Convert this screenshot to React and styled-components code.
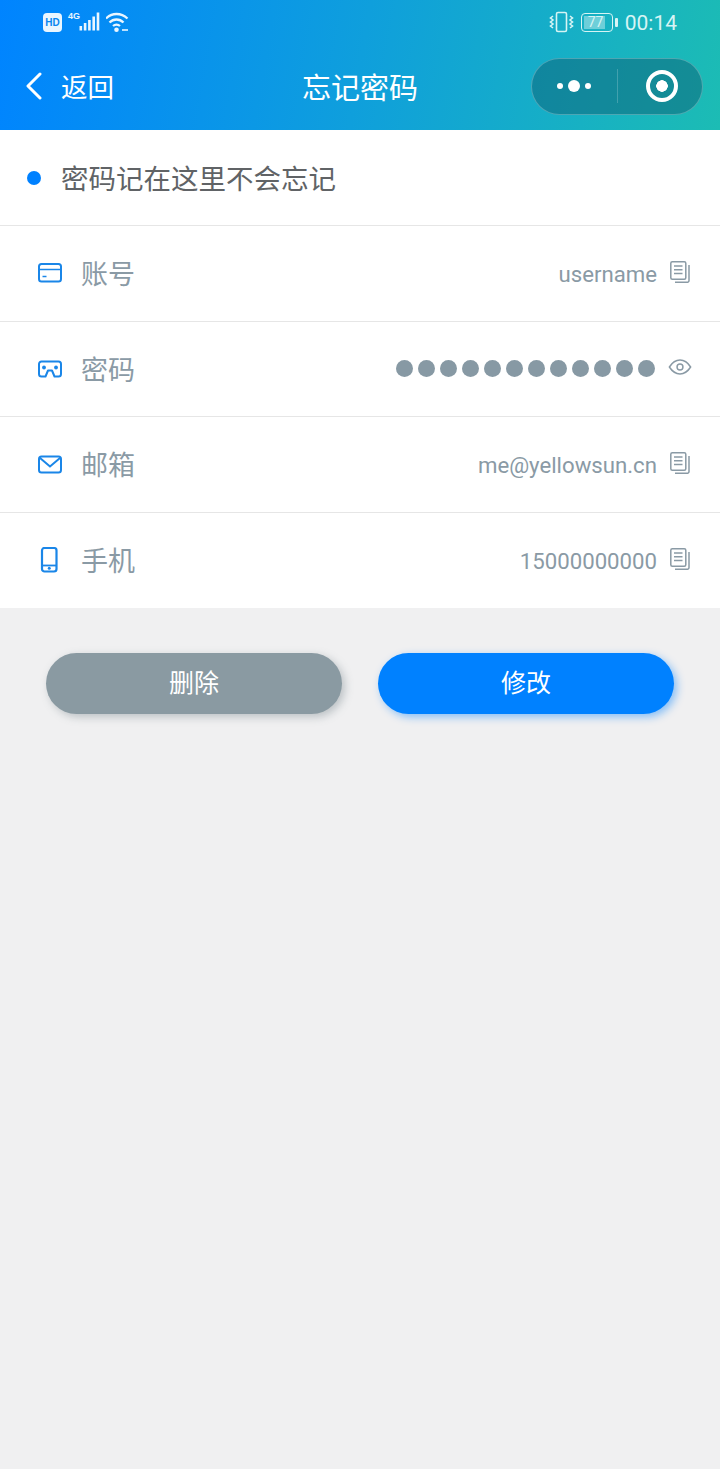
import React from 'react'
import styled, { createGlobalStyle } from 'styled-components'

const FONT = `"Noto Sans CJK SC", "Noto Sans", sans-serif`

const GlobalStyle = createGlobalStyle`
    html, body {
        margin: 0;
        padding: 0;
        background: #f0f0f1;
    }
    * {
        box-sizing: border-box;
    }
`

const rows = [
    { label: '账号', value: 'username', icon: 'card' },
    { label: '密码', icon: 'vr', secret: 12 },
    { label: '邮箱', value: 'me@yellowsun.cn', icon: 'mail' },
    { label: '手机', value: '15000000000', icon: 'phone' },
]

const RowIcon = ({ name }) => {
    if (name === 'card') {
        return (
            <svg width="26" height="26" viewBox="0 0 26 26" fill="none" stroke="#1a86e8" strokeWidth="2">
                <rect x="3" y="4" width="22" height="17.500" rx="2.500" />
                <path d="M3 9.500h22" strokeWidth="1.500" />
                <path d="M6.500 16.500h4" strokeWidth="1.500" />
            </svg>
        )
    }
    if (name === 'vr') {
        return (
            <svg width="26" height="26" viewBox="0 0 26 26" fill="none" stroke="#1a86e8" strokeWidth="2" strokeLinejoin="round">
                <path d="M5.500 5.500h17a2.500 2.500 0 0 1 2.500 2.500v10a2.500 2.500 0 0 1-2.500 2.500h-4l-2.500-6h-4l-2.500 6h-4A2.500 2.500 0 0 1 3 18V8a2.500 2.500 0 0 1 2.500-2.500z" />
                <circle cx="8" cy="11.500" r="1.900" fill="#1a86e8" stroke="none" />
                <circle cx="20" cy="11.500" r="1.900" fill="#1a86e8" stroke="none" />
            </svg>
        )
    }
    if (name === 'mail') {
        return (
            <svg width="26" height="26" viewBox="0 0 26 26" fill="none" stroke="#1a86e8" strokeWidth="2">
                <rect x="3" y="5.500" width="22" height="16" rx="2.500" />
                <path d="M4 7l10 8.500L24 7" />
            </svg>
        )
    }
    return (
        <svg width="26" height="26" viewBox="0 0 26 26" fill="none" stroke="#1a86e8" strokeWidth="2.200">
            <rect x="6" y="1" width="14.500" height="23.500" rx="2.500" />
            <path d="M6 18.500h14.500" strokeWidth="1.800" />
            <circle cx="13.250" cy="21.300" r="1.500" fill="#1a86e8" stroke="none" />
        </svg>
    )
}

const CopyIcon = () => (
    <svg width="20" height="22" viewBox="0 0 20 22" fill="none" stroke="#8a9aa5" strokeWidth="1.500">
        <rect x="0.800" y="0.800" width="15" height="17.500" rx="1.500" />
        <path d="M4 5h8.500M4 8.800h8.500M4 12.500h8.500" />
        <path d="M19 4v15.500a1.800 1.800 0 0 1-1.800 1.800H5" />
    </svg>
)

const EyeIcon = () => (
    <svg width="26" height="20" viewBox="0 0 26 20" fill="none" stroke="#8a9aa5" strokeWidth="1.600">
        <path d="M1.500 10C5 4.500 9 2.500 13 2.500s8 2 11.500 7.500C21 15.500 17 17.500 13 17.500S5 15.500 1.500 10z" />
        <circle cx="13" cy="10" r="3.200" />
    </svg>
)

const App = () => {
    return (
        <Page>
            <GlobalStyle />
            <Header>
                <StatusBar>
                    <StatusGroup>
                        <HdBadge>HD</HdBadge>
                        <FourG>4G</FourG>
                        <svg width="21" height="20" viewBox="0 0 21 20" fill="#eaf6ff">
                            <rect x="0.500" y="14" width="2.600" height="4.500" />
                            <rect x="4.800" y="11" width="2.600" height="7.500" />
                            <rect x="9.100" y="8" width="2.600" height="10.500" />
                            <rect x="13.400" y="4.500" width="2.600" height="14" />
                            <rect x="17.700" y="0.500" width="2.600" height="18" />
                        </svg>
                        <svg width="24" height="22" viewBox="1 0 24 22" fill="none" stroke="#eaf6ff" strokeWidth="2.300">
                            <path d="M1 7.500C7 1.500 16 1.500 22.500 7.500" />
                            <path d="M4.500 11.500C8.500 7.500 14.500 7.500 18.500 11.500" />
                            <path d="M8 15C10 13.200 13 13.200 15 15" />
                            <circle cx="11.500" cy="18.800" r="2.300" fill="#eaf6ff" stroke="none" />
                            <path d="M17 19h6" strokeWidth="1.600" />
                        </svg>
                    </StatusGroup>
                    <StatusGroup>
                        <svg width="25" height="22" viewBox="0 0 25 22" fill="none" stroke="#d6f4f4" strokeWidth="1.600">
                            <rect x="7.500" y="1.500" width="10" height="19" rx="1.500" />
                            <path d="M4 5L1.500 7 4 9 1.500 11 4 13 1.500 15 4 17" />
                            <path d="M21 5l2.500 2L21 9l2.500 2-2.500 2 2.500 2-2.500 2" />
                        </svg>
                        <Battery>
                            <BatteryBody>
                                <BatteryFill>77</BatteryFill>
                            </BatteryBody>
                            <BatteryTip />
                        </Battery>
                        <Clock>00:14</Clock>
                    </StatusGroup>
                </StatusBar>
                <NavBar>
                    <BackLink>
                        <svg width="16" height="28" viewBox="0 0 16 28" fill="none" stroke="#fff" strokeWidth="3" strokeLinecap="round" strokeLinejoin="round">
                            <path d="M14 2L2 14l12 12" />
                        </svg>
                        <span>返回</span>
                    </BackLink>
                    <NavTitle>忘记密码</NavTitle>
                    <Capsule>
                        <Dots>
                            <Dot $size={6} />
                            <Dot $size={12} />
                            <Dot $size={6} />
                        </Dots>
                        <CapsuleDivider />
                        <Target />
                    </Capsule>
                </NavBar>
            </Header>

            <List>
                <TitleRow>
                    <Bullet />
                    <TitleText>密码记在这里不会忘记</TitleText>
                </TitleRow>
                {rows.map((row) => (
                    <Row key={row.label}>
                        <IconSlot>
                            <RowIcon name={row.icon} />
                        </IconSlot>
                        <Label>{row.label}</Label>
                        {row.secret ? (
                            <SecretDots>
                                {Array.from({ length: row.secret }).map((_, i) => (
                                    <SecretDot key={i} />
                                ))}
                            </SecretDots>
                        ) : (
                            <Value>{row.value}</Value>
                        )}
                        <ActionSlot>{row.secret ? <EyeIcon /> : <CopyIcon />}</ActionSlot>
                    </Row>
                ))}
            </List>

            <Buttons>
                <ActionButton $tone="gray">删除</ActionButton>
                <ActionButton $tone="blue">修改</ActionButton>
            </Buttons>
        </Page>
    )
}

export default App

const Page = styled.div`
    width: 720px;
    min-height: 1469px;
    background: #f0f0f1;
    font-family: ${FONT};
`

const Header = styled.header`
    height: 130px;
    background: linear-gradient(100deg, #0084ff 0%, #0f9fdc 50%, #1cbcb4 100%);
    color: #fff;
`

const StatusBar = styled.div`
    height: 44px;
    padding: 0 43px;
    display: flex;
    align-items: center;
    justify-content: space-between;
`

const StatusGroup = styled.div`
    display: flex;
    align-items: center;
    gap: 6px;
`

const HdBadge = styled.span`
    width: 19px;
    height: 19px;
    border-radius: 4px;
    background: #eaf6ff;
    color: #0a86f0;
    font-family: "Liberation Sans", sans-serif;
    font-size: 10px;
    font-weight: 700;
    line-height: 19px;
    text-align: center;
`

const FourG = styled.span`
    margin-right: -7px;
    margin-top: -12px;
    font-family: "Liberation Sans", sans-serif;
    font-size: 9px;
    font-weight: 700;
    color: #eaf6ff;
`

const Battery = styled.div`
    display: flex;
    align-items: center;
    gap: 2px;
    margin-left: 1px;
`

const BatteryBody = styled.div`
    width: 32px;
    height: 19px;
    padding: 2px;
    border: 1.5px solid #d6f4f4;
    border-radius: 4px;
`

const BatteryFill = styled.div`
    width: 80%;
    height: 100%;
    background: rgba(214, 244, 244, 0.45);
    color: #d6f4f4;
    font-family: "Roboto", sans-serif;
    font-size: 14px;
    line-height: 12px;
    text-indent: 4px;
`

const BatteryTip = styled.div`
    width: 3px;
    height: 9px;
    border-radius: 1px;
    background: #d6f4f4;
`

const Clock = styled.span`
    margin-left: 1px;
    padding-top: 1px;
    font-family: "Roboto", sans-serif;
    font-size: 21px;
    color: #d6f4f4;
`

const NavBar = styled.div`
    height: 86px;
    padding: 0 17px 3px;
    display: grid;
    grid-template-columns: minmax(0, 1fr) auto minmax(0, 1fr);
    align-items: center;
`

const BackLink = styled.div`
    display: flex;
    align-items: center;
    gap: 19px;
    padding-left: 9px;
    font-size: 26.5px;
`

const NavTitle = styled.div`
    font-size: 29px;
`

const Capsule = styled.div`
    justify-self: end;
    width: 172px;
    height: 57px;
    margin-top: 1px;
    border: 1px solid rgba(255, 255, 255, 0.25);
    border-radius: 29px;
    background: rgba(12, 92, 112, 0.48);
    display: flex;
    align-items: center;
    padding-left: 25px;
`

const Dots = styled.div`
    width: 36px;
    display: flex;
    align-items: center;
    gap: 5px;
`

const Dot = styled.span`
    flex: none;
    width: ${(p) => p.$size}px;
    height: ${(p) => p.$size}px;
    border-radius: 50%;
    background: #fff;
`

const CapsuleDivider = styled.div`
    width: 1px;
    height: 34px;
    margin-left: 24px;
    background: rgba(255, 255, 255, 0.2);
`

const Target = styled.div`
    width: 32px;
    height: 32px;
    margin-left: 28px;
    border-radius: 50%;
    border: 4px solid #fff;
    background: radial-gradient(circle, #fff 0 5.5px, transparent 6px);
`

const List = styled.section`
    background: #fff;
`

const TitleRow = styled.div`
    height: 96px;
    padding: 0 27px;
    display: flex;
    align-items: center;
    gap: 20px;
    border-bottom: 1px solid #e6e6e6;
`

const Bullet = styled.span`
    width: 14px;
    height: 14px;
    border-radius: 50%;
    background: #0081ff;
`

const TitleText = styled.span`
    padding-bottom: 2px;
    font-size: 27.5px;
    color: #606366;
`

const Row = styled.div`
    height: 95.5px;
    padding: 0 30px 0 36px;
    display: flex;
    align-items: center;
    border-bottom: 1px solid #e6e6e6;
    &:last-child {
        border-bottom: 0;
    }
`

const IconSlot = styled.div`
    width: 26px;
    height: 26px;
    display: flex;
`

const Label = styled.span`
    margin-left: 19px;
    margin-right: auto;
    padding-bottom: 1px;
    font-size: 27px;
    color: #8a9aa5;
`

const Value = styled.span`
    margin-right: 1px;
    padding-top: 2px;
    font-family: "Roboto", sans-serif;
    font-size: 22.2px;
    color: #8a9aa5;
`

const SecretDots = styled.div`
    display: flex;
    gap: 5px;
    margin-right: 3px;
`

const SecretDot = styled.span`
    width: 17px;
    height: 17px;
    border-radius: 50%;
    background: #8799a4;
`

const ActionSlot = styled.div`
    width: 24px;
    margin-left: 10px;
    margin-right: -2px;
    display: flex;
    justify-content: center;
    margin-top: -3px;
`

const Buttons = styled.div`
    padding: 45px 46px 0;
    display: flex;
    gap: 36px;
`

const ActionButton = styled.button`
    flex: 1;
    height: 61px;
    padding: 0 0 6px;
    border: 0;
    border-radius: 31px;
    color: #fff;
    font-family: ${FONT};
    font-size: 25px;
    background: ${(p) => (p.$tone === 'blue' ? '#0081ff' : '#8a9aa2')};
    box-shadow: ${(p) => (p.$tone === 'blue' ? '3px 3px 8px rgba(0, 129, 255, 0.45)' : '3px 3px 8px rgba(90, 105, 115, 0.35)')};
`
